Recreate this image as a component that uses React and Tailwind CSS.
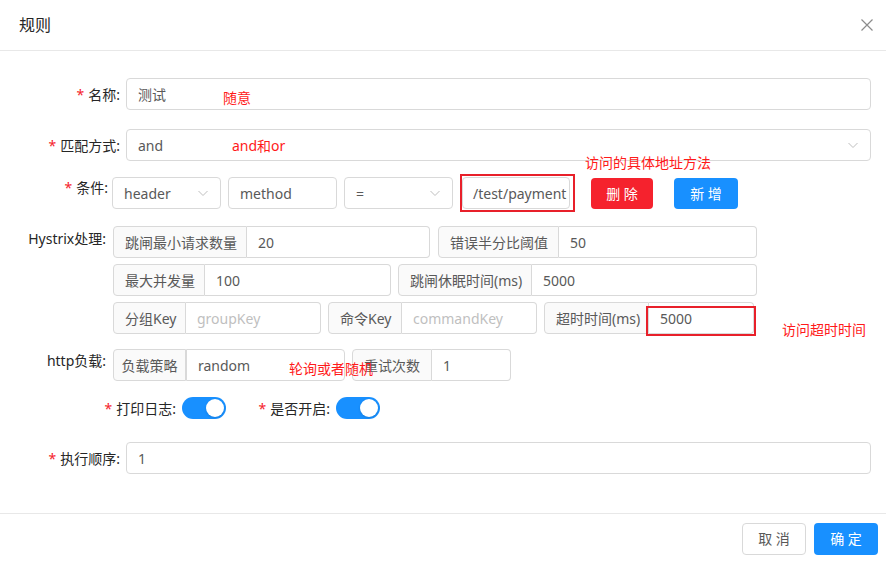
import React from 'react';

const FONT = "font-['Noto_Sans','Noto_Sans_CJK_SC',sans-serif]";

function Chevron({ className = '' }) {
  return (
    <svg width="12" height="12" viewBox="0 0 12 12" className={className}>
      <polyline points="1.5,4 6,8.5 10.5,4" fill="none" stroke="currentColor" strokeWidth="1" />
    </svg>
  );
}

function Label({ children, required = true, width, top = false }) {
  return (
    <div
      className={`flex justify-end shrink-0 text-[14px] text-[#262626] ${top ? 'items-start' : 'items-center'}`}
      style={{ width }}
    >
      {required && <span className="text-[#f5222d] mr-[4px] text-[14px]">*</span>}
      <span>{children}</span>
    </div>
  );
}

function Input({ value, placeholder, className = '' }) {
  return (
    <div className={`h-[32px] border border-[#d9d9d9] rounded-[4px] bg-white flex items-center px-[11px] text-[14px] overflow-hidden whitespace-nowrap ${className}`}>
      {value ? <span className="text-[#595959]">{value}</span> : <span className="text-[#bfbfbf]">{placeholder}</span>}
    </div>
  );
}

function Select({ value, className = '', faint = false }) {
  return (
    <div className={`h-[32px] border border-[#d9d9d9] rounded-[4px] bg-white flex items-center justify-between pl-[11px] pr-[11px] text-[14px] ${className}`}>
      <span className="text-[#595959]">{value}</span>
      <Chevron className={faint ? 'text-[#e0e0e0]' : 'text-[#bfbfbf]'} />
    </div>
  );
}

function Group({ addon, value, placeholder, addonW, inputW }) {
  return (
    <div className="flex h-[32px] text-[14px]">
      <div
        className="h-full border border-[#d9d9d9] rounded-l-[4px] bg-[#fafafa] flex items-center px-[11px] text-[#595959] whitespace-nowrap"
        style={{ width: addonW }}
      >
        {addon}
      </div>
      <div
        className="h-full border border-l-0 border-[#d9d9d9] rounded-r-[4px] bg-white flex items-center px-[11px]"
        style={{ width: inputW }}
      >
        {value ? <span className="text-[#595959]">{value}</span> : <span className="text-[#bfbfbf]">{placeholder}</span>}
      </div>
    </div>
  );
}

function Switch() {
  return (
    <div className="w-[44px] h-[22px] rounded-full bg-[#1890ff] relative">
      <div className="absolute right-[2px] top-[2px] w-[18px] h-[18px] rounded-full bg-white shadow" />
    </div>
  );
}

function Note({ children, className }) {
  return <span className={`absolute text-[14px] leading-[20px] text-[#ff1a1a] whitespace-nowrap ${className}`}>{children}</span>;
}

export default function App() {
  return (
    <div className={`relative w-[886px] h-[563px] bg-white flex flex-col ${FONT}`}>
      <header className="h-[51px] shrink-0 border-b border-[#e8e8e8] flex items-center justify-between pl-[19px] pr-[12px]">
        <h1 className="text-[16px] text-[#262626]">规则</h1>
        <svg width="14" height="14" viewBox="0 0 14 14" className="text-[#8c8c8c]">
          <path d="M1.5 1.5 L12.5 12.5 M12.5 1.5 L1.5 12.5" stroke="currentColor" strokeWidth="1.2" />
        </svg>
      </header>

      <main className="flex-1 flex flex-col pt-[27px] pr-[15px]">
        <div className="flex h-[32px] gap-[6px]">
          <Label width={120}>名称:</Label>
          <Input value="测试" className="flex-1" />
        </div>

        <div className="flex h-[32px] gap-[6px] mt-[19px]">
          <Label width={120}>匹配方式:</Label>
          <Select value="and" className="flex-1" />
        </div>

        <div className="flex mt-[16px]">
          <Label width={108} top>条件:</Label>
          <div className="flex items-center ml-[4px]">
            <Select value="header" className="w-[109px]" />
            <Input value="method" className="w-[109px] ml-[7px]" />
            <Select value="=" className="w-[109px] ml-[7px]" />
            <Input value="/test/payment" className="w-[108px] ml-[9px] !pl-[10px] !pr-[2px]" />
            <button className="w-[62px] h-[31px] ml-[21px] rounded-[4px] bg-[#f5222d] text-white text-[14px]">删 除</button>
            <button className="w-[64px] h-[31px] ml-[21px] rounded-[4px] bg-[#1890ff] text-white text-[14px]">新 增</button>
          </div>
        </div>

        <div className="flex mt-[17px]">
          <Label width={106} required={false} top>
            <span className="leading-[26px]">Hystrix处理:</span>
          </Label>
          <div className="flex flex-col ml-[7px] gap-[6px]">
            <div className="flex gap-[8px]">
              <Group addon="跳闸最小请求数量" value="20" addonW={134} inputW={183} />
              <Group addon="错误半分比阈值" value="50" addonW={121} inputW={198} />
            </div>
            <div className="flex gap-[7px]">
              <Group addon="最大并发量" value="100" addonW={92} inputW={186} />
              <Group addon="跳闸休眠时间(ms)" value="5000" addonW={134} inputW={225} />
            </div>
            <div className="flex gap-[7px]">
              <Group addon="分组Key" placeholder="groupKey" addonW={73} inputW={135} />
              <Group addon="命令Key" placeholder="commandKey" addonW={74} inputW={135} />
              <Group addon="超时时间(ms)" value="5000" addonW={105} inputW={105} />
            </div>
          </div>
        </div>

        <div className="flex mt-[15px]">
          <Label width={106} required={false} top>
            <span className="leading-[24px]">http负载:</span>
          </Label>
          <div className="flex ml-[7px] gap-[7px]">
            <div className="flex h-[32px] text-[14px]">
              <div className="w-[73px] h-full border border-[#d9d9d9] rounded-l-[4px] bg-[#fafafa] flex items-center justify-center whitespace-nowrap text-[#595959]">负载策略</div>
              <Select value="random" faint className="w-[159px] !rounded-l-none" />
            </div>
            <Group addon="重试次数" value="1" addonW={80} inputW={79} />
          </div>
        </div>

        <div className="flex items-center h-[22px] mt-[16px]">
          <Label width={176}>打印日志:</Label>
          <div className="ml-[6px]"><Switch /></div>
          <Label width={104}>是否开启:</Label>
          <div className="ml-[6px]"><Switch /></div>
        </div>

        <div className="flex h-[32px] gap-[6px] mt-[23px]">
          <Label width={120}>执行顺序:</Label>
          <Input value="1" className="flex-1" />
        </div>
      </main>

      <footer className="h-[50px] shrink-0 border-t border-[#e8e8e8] flex items-center justify-end gap-[8px] pr-[8px]">
        <button className="w-[64px] h-[32px] rounded-[4px] border border-[#d9d9d9] bg-white text-[14px] text-[#595959]">取 消</button>
        <button className="w-[64px] h-[32px] rounded-[4px] bg-[#1890ff] text-white text-[14px]">确 定</button>
      </footer>

      {/* red annotations drawn over the form */}
      <Note className="left-[223px] top-[88px]">随意</Note>
      <Note className="left-[232px] top-[136px]">and和or</Note>
      <Note className="left-[585px] top-[153px]">访问的具体地址方法</Note>
      <div className="absolute left-[460px] top-[174px] w-[115px] h-[38px] border-2 border-[#e8202a]" />
      <div className="absolute left-[646px] top-[306px] w-[110px] h-[30px] border-2 border-[#e8202a]" />
      <Note className="left-[782px] top-[320px]">访问超时时间</Note>
      <Note className="left-[289px] top-[359px]">轮询或者随机</Note>
    </div>
  );
}
